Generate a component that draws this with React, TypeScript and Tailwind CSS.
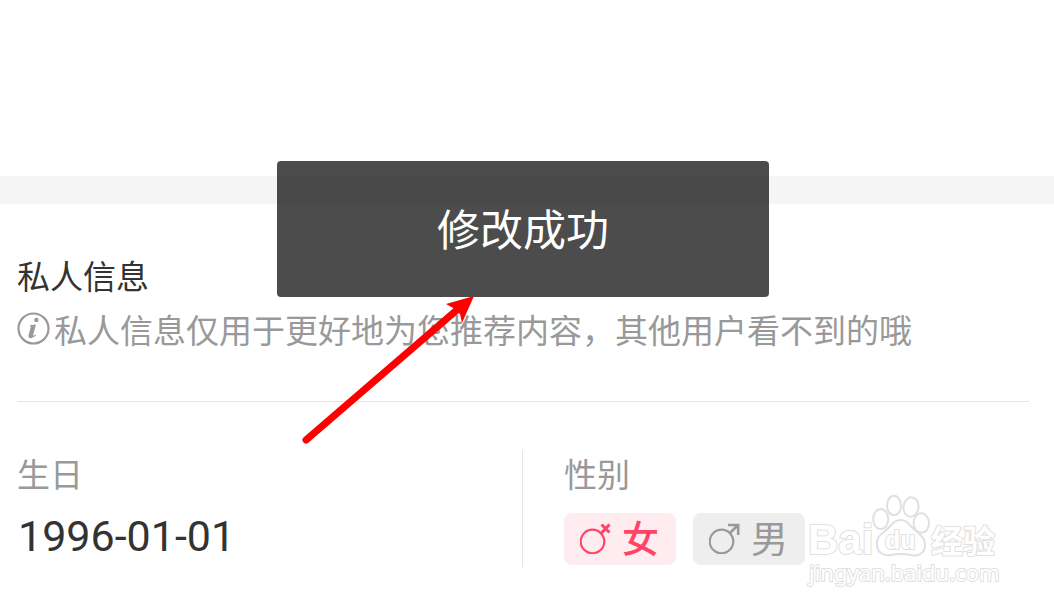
import { useState, type ReactNode } from 'react'
import { clsx } from 'clsx'

type Gender = 'female' | 'male'

function InfoIcon() {
  return (
    <svg width="33" height="33" viewBox="0 0 33 33" fill="none" aria-hidden="true" className="mt-1.5 shrink-0">
      <circle cx="16.5" cy="16.5" r="15" stroke="#999" strokeWidth="2.2" />
      <circle cx="19.4" cy="8" r="2.2" fill="#999" />
      <path d="M13 13.3 L19 12.4 L16.1 23 Q16 24.4 18.7 22.4 L19.3 23.1 Q16 26.6 13.1 26.3 Q10.9 25.7 11.6 23.1 L13.7 15.3 Q14 14.1 12.8 14.1 Z" fill="#999" />
    </svg>
  )
}

function FemaleIcon() {
  return (
    <svg width="32" height="32" viewBox="0 0 32 32" fill="none" stroke="currentColor" aria-hidden="true">
      <circle cx="12.5" cy="19.5" r="11.8" strokeWidth="2.2" />
      <path d="M20.5 12 L29.5 2.5 M21.500 2.500 L29.5 10.500" strokeWidth="3" />
    </svg>
  )
}

function MaleIcon() {
  return (
    <svg width="32" height="32" viewBox="0 0 32 32" fill="none" stroke="currentColor" aria-hidden="true">
      <circle cx="12.5" cy="19.5" r="11.8" strokeWidth="2.2" />
      <path d="M20.5 11.5 L29 3 M19 3 H29.2 V13" strokeWidth="2.6" />
    </svg>
  )
}

function GenderOption({
  value,
  checked,
  onSelect,
  icon,
  children,
}: {
  value: Gender
  checked: boolean
  onSelect: (v: Gender) => void
  icon: ReactNode
  children: ReactNode
}) {
  return (
    <label
      className={clsx(
        'relative flex h-[52px] w-28 cursor-pointer items-start gap-2.5 rounded-lg pt-[9px] pl-4 text-[37px] leading-[38px]',
        checked ? 'bg-[#ffecf0] font-medium text-[#ff4468]' : 'bg-[#eeeeee] text-[#999999]',
      )}
    >
      <input
        type="radio"
        name="gender"
        value={value}
        checked={checked}
        onChange={() => onSelect(value)}
        className="absolute inset-0 cursor-pointer appearance-none rounded-lg"
      />
      {icon}
      {children}
    </label>
  )
}

function Watermark() {
  return (
    <svg
      width="200"
      height="100"
      viewBox="0 0 200 100"
      fill="#fff"
      stroke="#e0e0e0"
      strokeWidth="2"
      strokeLinejoin="round"
      className="pointer-events-none absolute top-[492px] right-[49px]"
    >
      <g paintOrder="stroke" className="font-['Liberation_Sans','Noto_Sans_CJK_SC',sans-serif] font-bold">
        <text x="3" y="62" fontSize="42">Bai</text>
        <text x="126" y="61" fontSize="32" className="font-['Noto_Sans_CJK_SC',sans-serif]">经验</text>
      </g>
      <ellipse cx="75.7" cy="27" rx="7.5" ry="10" />
      <ellipse cx="89" cy="13.5" rx="7" ry="9.7" />
      <ellipse cx="106" cy="15" rx="7.5" ry="9.7" transform="rotate(8 106 15)" />
      <ellipse cx="116.3" cy="31" rx="7.7" ry="9.7" />
      <path d="M95.500 28 C89 28 87 33 80 39 C73 44 71 48 72 54 C73 61 79 64 86 63 Q96 61 106 63 C113 65 120 61 120 53 C120 47 117 44 111 39 C104 33 102 28 95.500 28 Z" />
      <text x="80" y="57" fontSize="25" paintOrder="stroke" className="font-['Liberation_Sans',sans-serif] font-bold">du</text>
      <text x="4" y="89" fontSize="22" paintOrder="stroke" className="font-['Noto_Sans',sans-serif]">jingyan.baidu.com</text>
    </svg>
  )
}

export default function App() {
  const [gender, setGender] = useState<Gender>('female')

  return (
    <main className="relative min-h-screen overflow-hidden bg-white pt-44 font-['Roboto','Noto_Sans_CJK_SC',sans-serif]">
      <div className="h-7 bg-[#f5f5f5]" />

      <section className="mr-[25px] ml-[17px] pt-12">
        <h2 className="text-[33px] leading-[52px] text-[#333333]">私人信息</h2>
        <p className="mt-0.5 flex items-start gap-1 text-[33px] leading-[52px] whitespace-nowrap text-[#999999]">
          <InfoIcon />
          私人信息仅用于更好地为您推荐内容，其他用户看不到的哦
        </p>

        <div className="mt-[43px] grid grid-cols-2 border-t border-[#e5e5e5] pt-12">
          <div className="h-[117px]">
            <h3 className="text-[33px] leading-[52px] text-[#999999]">生日</h3>
            <time dateTime="1996-01-01" className="mt-2 block pl-px text-[43px] leading-[52px] text-[#333333]">
              1996-01-01
            </time>
          </div>
          <fieldset className="-ml-px h-[117px] border-l border-[#e5e5e5] pl-[41px]">
            <legend className="float-left w-full text-[33px] leading-[52px] text-[#999999]">性别</legend>
            <div className="clear-both flex gap-[17px] pt-[11px]">
              <GenderOption value="female" checked={gender === 'female'} onSelect={setGender} icon={<FemaleIcon />}>
                女
              </GenderOption>
              <GenderOption value="male" checked={gender === 'male'} onSelect={setGender} icon={<MaleIcon />}>
                男
              </GenderOption>
            </div>
          </fieldset>
        </div>
      </section>

      {/* toast */}
      <div
        role="status"
        className="absolute top-[161px] left-[277px] flex h-34 w-[492px] items-center justify-center rounded bg-black/70 pt-1 text-[43px] text-white"
      >
        修改成功
      </div>

      <svg
        width="180"
        height="156"
        viewBox="0 0 180 156"
        fill="#f00"
        aria-hidden="true"
        className="pointer-events-none absolute top-[292px] left-[298px]"
      >
        <path d="M8 148 L160 17" stroke="#f00" strokeWidth="7" strokeLinecap="round" />
        <path d="M176 4 L148 12 L157 17 L162 22 L164 31 Z" />
      </svg>

      <Watermark />
    </main>
  )
}
